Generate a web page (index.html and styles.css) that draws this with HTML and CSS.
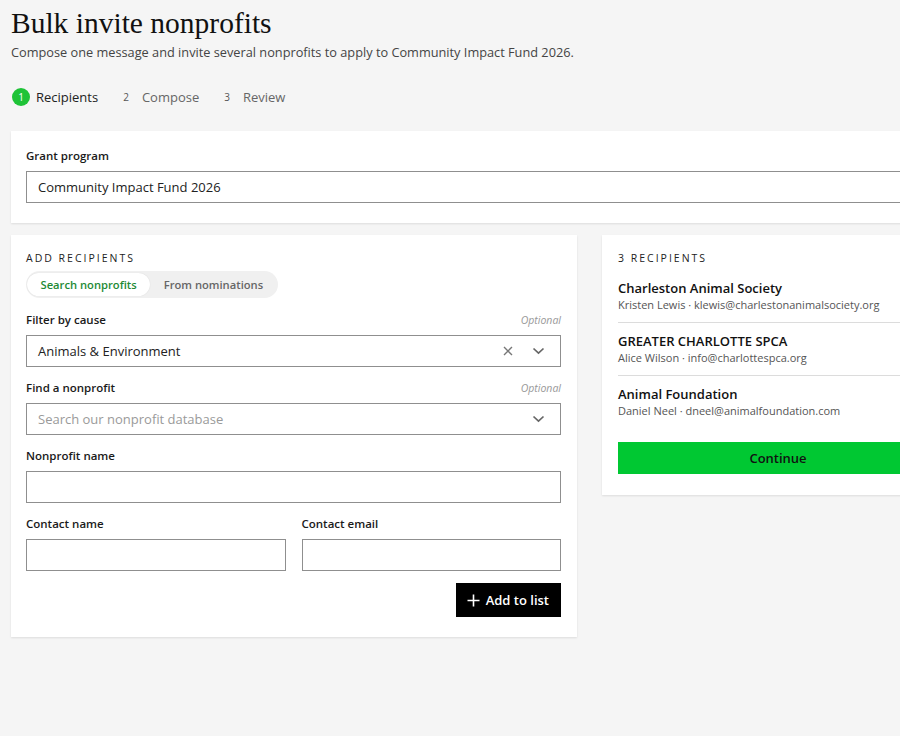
FILE: index.html
```html
<!DOCTYPE html>
<html lang="en">
<head>
<meta charset="utf-8">
<title>Bulk invite nonprofits</title>
<link rel="stylesheet" href="styles.css">
</head>
<body>
<div class="page">
  <h1 class="title">Bulk invite nonprofits</h1>
  <p class="subtitle">Compose one message and invite several nonprofits to apply to Community Impact Fund 2026.</p>

  <ol class="steps">
    <li class="step active"><span class="num">1</span><span class="label">Recipients</span></li>
    <li class="step"><span class="num">2</span><span class="label">Compose</span></li>
    <li class="step"><span class="num">3</span><span class="label">Review</span></li>
  </ol>

  <div class="main">
    <section class="card grant">
      <label class="field-label">Grant program</label>
      <div class="input"><span class="value">Community Impact Fund 2026</span></div>
    </section>

    <div class="columns">
      <section class="card add">
        <h2 class="eyebrow">ADD RECIPIENTS</h2>
        <div class="tabs">
          <span class="tab on">Search nonprofits</span>
          <span class="tab">From nominations</span>
        </div>

        <div class="field">
          <div class="label-row"><span class="field-label">Filter by cause</span><span class="optional">Optional</span></div>
          <div class="input select">
            <span class="value">Animals &amp; Environment</span>
            <span class="icons">
              <svg class="x" width="10" height="10" viewBox="0 0 10 10"><path d="M1 1 L9 9 M9 1 L1 9" stroke="#777" stroke-width="1.4" fill="none"/></svg>
              <svg class="chev" width="13" height="8" viewBox="0 0 13 8"><path d="M1.5 1.5 L6.5 6.2 L11.5 1.5" stroke="#666" stroke-width="1.7" fill="none"/></svg>
            </span>
          </div>
        </div>

        <div class="field">
          <div class="label-row"><span class="field-label">Find a nonprofit</span><span class="optional">Optional</span></div>
          <div class="input select">
            <span class="placeholder">Search our nonprofit database</span>
            <span class="icons">
              <svg class="chev" width="13" height="8" viewBox="0 0 13 8"><path d="M1.5 1.5 L6.5 6.2 L11.5 1.5" stroke="#666" stroke-width="1.7" fill="none"/></svg>
            </span>
          </div>
        </div>

        <div class="field">
          <div class="label-row"><span class="field-label">Nonprofit name</span></div>
          <div class="input"></div>
        </div>

        <div class="field-pair">
          <div class="field">
            <div class="label-row"><span class="field-label">Contact name</span></div>
            <div class="input"></div>
          </div>
          <div class="field">
            <div class="label-row"><span class="field-label">Contact email</span></div>
            <div class="input"></div>
          </div>
        </div>

        <div class="actions">
          <button class="btn-dark"><svg width="13" height="13" viewBox="0 0 13 13"><path d="M6.5 0.5 V12.5 M0.5 6.5 H12.5" stroke="#fff" stroke-width="1.6"/></svg>Add to list</button>
        </div>
      </section>

      <section class="card list">
        <h2 class="eyebrow">3 RECIPIENTS</h2>
        <ul class="recipients">
          <li>
            <div class="org">Charleston Animal Society</div>
            <div class="contact">Kristen Lewis · klewis@charlestonanimalsociety.org</div>
          </li>
          <li>
            <div class="org">GREATER CHARLOTTE SPCA</div>
            <div class="contact">Alice Wilson · info@charlottespca.org</div>
          </li>
          <li>
            <div class="org">Animal Foundation</div>
            <div class="contact">Daniel Neel · dneel@animalfoundation.com</div>
          </li>
        </ul>
        <button class="btn-green">Continue</button>
      </section>
    </div>
  </div>
</div>
</body>
</html>
```

FILE: styles.css
```css
* { box-sizing: border-box; }

html, body {
  margin: 0;
  padding: 0;
  background: #f5f5f5;
  overflow: hidden;
}

body {
  font-family: "Open Sans", "Liberation Sans", sans-serif;
  color: #1a1a1a;
  width: 900px;
  height: 736px;
}

.page {
  padding: 6px 0 0 11px;
}

.title {
  font-family: "Liberation Serif", "Times New Roman", serif;
  font-weight: 400;
  font-size: 29.5px;
  line-height: 34px;
  margin: 0;
  color: #111;
}

.subtitle {
  margin: 3px 0 0;
  font-size: 12.75px;
  line-height: 18px;
  color: #444;
}

.steps {
  list-style: none;
  padding: 0;
  display: flex;
  height: 69px;
  align-items: center;
  margin: 1px 0 0;
}

.step {
  display: flex;
  align-items: center;
  font-size: 13px;
  color: #666;
  margin-right: 25px;
}

.step .num {
  font-size: 10px;
  color: #555;
  margin-right: 13px;
}

.step.active .num {
  width: 18px;
  height: 18px;
  display: inline-flex;
  align-items: center;
  justify-content: center;
  background: #1ec337;
  color: #fff;
  border-radius: 50%;
  margin-right: 6px;
  margin-left: 1px;
}

.step.active .label { color: #222; }

.main {
  width: 943px;
}

.card {
  background: #fff;
  box-shadow: 0 1px 2px rgba(0, 0, 0, 0.10);
}

.grant {
  padding: 17px 15px 20px;
}

.field-label {
  font-size: 11.5px;
  font-weight: 600;
  color: #1a1a1a;
  display: block;
}

.grant .field-label { margin-bottom: 7px; line-height: 16px; }

.input {
  height: 32px;
  border: 1px solid #8f8f8f;
  background: #fff;
  display: flex;
  align-items: center;
  padding: 0 11px;
  font-size: 13px;
  color: #222;
}

.input .placeholder { color: #9a9a9a; }

.select { justify-content: space-between; }

.icons {
  display: flex;
  align-items: center;
  gap: 19px;
  padding-right: 4px;
}

.columns {
  display: flex;
  gap: 25px;
  margin-top: 12px;
  align-items: flex-start;
}

.add {
  width: 566px;
  padding: 16px 16px 20px 15px;
}

.list {
  width: 352px;
  padding: 16px 16px 21px;
}

.eyebrow {
  margin: 0;
  font-size: 10.5px;
  font-weight: 400;
  letter-spacing: 2px;
  line-height: 14px;
  color: #222;
}

.tabs {
  display: inline-flex;
  background: #f0f0f0;
  border-radius: 14px;
  padding: 2px 1px;
  margin-top: 6px;
  height: 27px;
}

.tab {
  display: inline-flex;
  align-items: center;
  font-size: 11.2px;
  font-weight: 600;
  color: #666;
  padding: 0 13.5px;
  border-radius: 12px;
}

.tab.on {
  background: #fff;
  color: #1e8a35;
  box-shadow: 0 0 1px rgba(0, 0, 0, 0.15);
}

.field { margin-top: 13px; }
.tabs + .field { margin-top: 14px; }

.label-row {
  display: flex;
  justify-content: space-between;
  align-items: baseline;
  line-height: 16px;
  margin-bottom: 7px;
}

.optional {
  font-size: 10.5px;
  font-style: italic;
  color: #999;
}

.field-pair {
  display: flex;
  gap: 16px;
}

.field-pair .field { flex: 1; }

.actions {
  display: flex;
  justify-content: flex-end;
  margin-top: 12px;
}

.btn-dark {
  background: #000;
  color: #fff;
  border: none;
  height: 34px;
  padding: 0 12px 0 11px;
  font-family: inherit;
  font-size: 13px;
  font-weight: 600;
  display: inline-flex;
  align-items: center;
  gap: 6px;
}

.recipients {
  list-style: none;
  margin: 5px 0 0;
  padding: 0;
}

.recipients li {
  padding: 9px 0 9px;
  border-bottom: 1px solid #dcdcdc;
}

.recipients li:last-child { border-bottom: none; }

.org {
  font-size: 13px;
  font-weight: 600;
  color: #111;
  line-height: 18px;
}

.contact {
  font-size: 11px;
  color: #555;
  line-height: 16px;
}

.btn-green {
  margin-top: 14px;
  width: 100%;
  height: 32px;
  border: none;
  background: #00c832;
  color: #111;
  font-family: inherit;
  font-size: 13px;
  font-weight: 600;
}
```
